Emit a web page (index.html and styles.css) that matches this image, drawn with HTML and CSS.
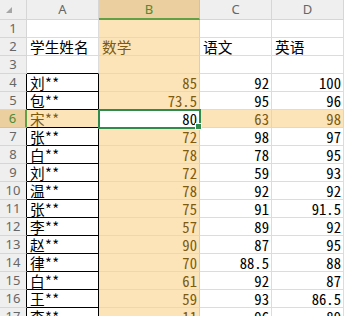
FILE: index.html
```html
<!DOCTYPE html>
<html lang="zh-CN">
<head>
    <meta charset="UTF-8">
    <meta name="viewport" content="width=device-width, initial-scale=1.0">
    <title>成绩表</title>
    <link rel="stylesheet" href="styles.css">
</head>
<body>
    <div class="sheet">
        <!-- column headers -->
        <div class="corner"><span class="corner-mark"></span></div>
        <div class="col-head">A</div>
        <div class="col-head col-on">B</div>
        <div class="col-head">C</div>
        <div class="col-head">D</div>

        <div class="row-head">1</div>
        <div class="cell"></div>
        <div class="cell hl-col"></div>
        <div class="cell"></div>
        <div class="cell"></div>

        <div class="row-head">2</div>
        <div class="cell">学生姓名</div>
        <div class="cell hl-col">数学</div>
        <div class="cell">语文</div>
        <div class="cell">英语</div>

        <div class="row-head">3</div>
        <div class="cell box-top"></div>
        <div class="cell hl-col"></div>
        <div class="cell"></div>
        <div class="cell"></div>

        <div class="row-head boxed-edge">4</div>
        <div class="cell boxed">刘**</div>
        <div class="cell hl-col num">85</div>
        <div class="cell num">92</div>
        <div class="cell num">100</div>

        <div class="row-head boxed-edge">5</div>
        <div class="cell boxed">包**</div>
        <div class="cell hl-col num">73.5</div>
        <div class="cell num">95</div>
        <div class="cell num">96</div>

        <div class="row-head row-on">6</div>
        <div class="cell boxed hl-row">宋**</div>
        <div class="cell num selected">80</div>
        <div class="cell num hl-row">63</div>
        <div class="cell num hl-row">98</div>

        <div class="row-head boxed-edge">7</div>
        <div class="cell boxed">张**</div>
        <div class="cell hl-col num">72</div>
        <div class="cell num">98</div>
        <div class="cell num">97</div>

        <div class="row-head boxed-edge">8</div>
        <div class="cell boxed">白**</div>
        <div class="cell hl-col num">78</div>
        <div class="cell num">78</div>
        <div class="cell num">95</div>

        <div class="row-head boxed-edge">9</div>
        <div class="cell boxed">刘**</div>
        <div class="cell hl-col num">72</div>
        <div class="cell num">59</div>
        <div class="cell num">93</div>

        <div class="row-head boxed-edge">10</div>
        <div class="cell boxed">温**</div>
        <div class="cell hl-col num">78</div>
        <div class="cell num">92</div>
        <div class="cell num">92</div>

        <div class="row-head boxed-edge">11</div>
        <div class="cell boxed">张**</div>
        <div class="cell hl-col num">75</div>
        <div class="cell num">91</div>
        <div class="cell num">91.5</div>

        <div class="row-head boxed-edge">12</div>
        <div class="cell boxed">李**</div>
        <div class="cell hl-col num">57</div>
        <div class="cell num">89</div>
        <div class="cell num">92</div>

        <div class="row-head boxed-edge">13</div>
        <div class="cell boxed">赵**</div>
        <div class="cell hl-col num">90</div>
        <div class="cell num">87</div>
        <div class="cell num">95</div>

        <div class="row-head boxed-edge">14</div>
        <div class="cell boxed">律**</div>
        <div class="cell hl-col num">70</div>
        <div class="cell num">88.5</div>
        <div class="cell num">88</div>

        <div class="row-head boxed-edge">15</div>
        <div class="cell boxed">白**</div>
        <div class="cell hl-col num">61</div>
        <div class="cell num">92</div>
        <div class="cell num">87</div>

        <div class="row-head boxed-edge">16</div>
        <div class="cell boxed">王**</div>
        <div class="cell hl-col num">59</div>
        <div class="cell num">93</div>
        <div class="cell num">86.5</div>

        <div class="row-head boxed-edge">17</div>
        <div class="cell boxed">李**</div>
        <div class="cell hl-col num">11</div>
        <div class="cell num">96</div>
        <div class="cell num">89</div>
    </div>
</body>
</html>
```

FILE: styles.css
```css
* {
    box-sizing: border-box;
    margin: 0;
    padding: 0;
}

body {
    background-color: #ffffff;
    overflow: hidden;
    font-family: "Noto Sans Mono CJK SC", "Noto Sans CJK SC", "DejaVu Sans Mono", monospace;
}

.sheet {
    display: grid;
    grid-template-columns: 27px 72px 101px 72px 72px;
    grid-template-rows: 20px;
    grid-auto-rows: 18px;
    width: 344px;
}

/* header strip */
.corner,
.col-head,
.row-head {
    background-color: #efefef;
    color: #666666;
    font-family: "Noto Sans", "Liberation Sans", sans-serif;
    font-size: 13px;
    text-align: center;
    border-right: 1px solid #d6d6d6;
    border-bottom: 1px solid #d6d6d6;
}

.corner {
    position: relative;
}

.corner-mark {
    position: absolute;
    left: 6px;
    top: 7px;
    width: 0;
    height: 0;
    border-left: 6px solid transparent;
    border-bottom: 6px solid #a6a6a6;
}

.col-head {
    line-height: 19px;
}

.col-on {
    background-color: #ebcf9e;
    color: #4f8a36;
    border-right-color: #e0c08a;
    border-bottom: 2px solid #62a046;
    line-height: 18px;
}

.row-head {
    line-height: 17px;
}

.row-on {
    background-color: #ebcf9e;
    color: #4f8a36;
    border-right: 2px solid #62a046;
    border-bottom-color: #e0c08a;
}

.boxed-edge {
    border-right: 1px solid #000000;
}

/* body cells */
.cell {
    font-size: 14.67px;
    font-weight: 300;
    line-height: 17px;
    padding: 0 2px 0 3px;
    color: #000000;
    white-space: nowrap;
    border-right: 1px solid #dcdcdc;
    border-bottom: 1px solid #dcdcdc;
}

.num {
    text-align: right;
}

.hl-col,
.hl-row {
    background-color: #fde4b8;
    color: #7c5a10;
    border-right-color: #f0d3a0;
    border-bottom-color: #f1d6a6;
}

.hl-col {
    border-right-color: #eccc94;
}

.box-top {
    border-bottom: 1px solid #000000;
}

.boxed {
    border-right: 1px solid #000000;
    border-bottom: 1px solid #000000;
}

.selected {
    position: relative;
    background-color: #ffffff;
    color: #000000;
    outline: 2px solid #2f8a4c;
    outline-offset: -1px;
    z-index: 1;
}

/* fill handle */
.selected::after {
    content: "";
    position: absolute;
    right: -3px;
    bottom: -3px;
    width: 5px;
    height: 5px;
    background-color: #2f8a4c;
    border: 1px solid #ffffff;
}
```
